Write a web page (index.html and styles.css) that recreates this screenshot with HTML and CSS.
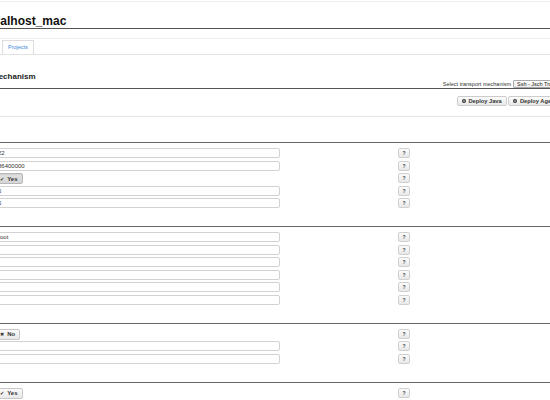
FILE: index.html
```html
<!DOCTYPE html>
<html lang="en">
<head>
  <meta charset="UTF-8">
  <meta name="viewport" content="width=device-width, initial-scale=1.0">
  <title>localhost_mac</title>
  <link rel="stylesheet" href="styles.css">
</head>
<body>
  <div class="page">
    <h1 class="host">localhost_mac</h1>

    <ul class="tabs">
      <li class="tab">Projects</li>
    </ul>

    <div class="mech-head">
      <h2>Mechanism</h2>
      <div class="transport">
        <label for="transport">Select transport mechanism</label>
        <select id="transport">
          <option>Ssh - Jsch Transport</option>
        </select>
      </div>
    </div>

    <div class="deploy">
      <button class="deploy-btn java"><svg width="4" height="4" viewBox="0 0 4 4"><circle cx="2" cy="2" r="1.4" fill="none" stroke="#333" stroke-width="1.2"/></svg>Deploy Java</button>
      <button class="deploy-btn agent"><svg width="4" height="4" viewBox="0 0 4 4"><circle cx="2" cy="2" r="1.4" fill="none" stroke="#333" stroke-width="1.2"/></svg>Deploy Agent</button>
    </div>

    <!-- connection -->
    <section class="group first">
      <div class="row"><input type="text" value="22"><button class="help">?</button></div>
      <div class="row"><input type="text" value="86400000"><button class="help">?</button></div>
      <div class="row"><div><button class="toggle on"><span class="mark">&#10004;</span>Yes</button></div><button class="help">?</button></div>
      <div class="row"><input type="text" value="5"><button class="help">?</button></div>
      <div class="row"><input type="text" value="5"><button class="help">?</button></div>
    </section>

    <!-- credentials -->
    <section class="group">
      <div class="row"><input type="text" value="root"><button class="help">?</button></div>
      <div class="row"><input type="text" value=""><button class="help">?</button></div>
      <div class="row"><input type="text" value=""><button class="help">?</button></div>
      <div class="row"><input type="text" value=""><button class="help">?</button></div>
      <div class="row"><input type="text" value=""><button class="help">?</button></div>
      <div class="row"><input type="text" value=""><button class="help">?</button></div>
    </section>

    <!-- proxy -->
    <section class="group">
      <div class="row"><div><button class="toggle"><span class="mark">&#10006;</span>No</button></div><button class="help">?</button></div>
      <div class="row"><input type="text" value=""><button class="help">?</button></div>
      <div class="row"><input type="text" value=""><button class="help">?</button></div>
    </section>

    <section class="group last">
      <div class="row"><div><button class="toggle"><span class="mark">&#10004;</span>Yes</button></div><button class="help">?</button></div>
    </section>
  </div>
</body>
</html>
```

FILE: styles.css
```css
body {
  margin: 0;
  font-family: "Liberation Sans", "DejaVu Sans", Arial, sans-serif;
  color: #333;
  background-color: #fff;
  overflow: hidden;
}

.page {
  width: 600px;
  margin: 1px 0 0 -20px;
  border-top: 1px solid #efefef;
}

.host {
  margin: 12px 0 0;
  padding-left: 3px;
  font-size: 12px;
  line-height: 14px;
  font-weight: bold;
  color: #111;
  border-bottom: 1px solid #555;
}

.tabs {
  display: flex;
  margin: 9px 0 0;
  padding: 1px 0 0 22px;
  list-style: none;
  border-top: 1px solid #eee;
  border-bottom: 1px solid #e3e3e3;
}

.tab {
  height: 13px;
  padding: 0 5px;
  line-height: 13px;
  font-size: 5.5px;
  color: #3b86d4;
  border: 1px solid #ddd;
  border-bottom: 0;
  background-color: #fff;
}

.mech-head {
  display: flex;
  align-items: flex-end;
  justify-content: space-between;
  padding-top: 17px;
  border-bottom: 1px solid #555;
}

.mech-head h2 {
  margin: 0 0 6px 12px;
  font-size: 8px;
  line-height: 10px;
  color: #222;
}

.transport {
  display: flex;
  align-items: center;
  gap: 2px;
  height: 8px;
}

.transport label {
  font-size: 5.5px;
  line-height: 8px;
  color: #333;
}

.transport select {
  appearance: none;
  width: 67px;
  height: 8px;
  padding: 0 3px;
  border: 1px solid #aaa;
  border-radius: 1px;
  font-family: inherit;
  font-size: 5.5px;
  line-height: 6px;
  color: #222;
  background: linear-gradient(#fff, #ececec);
}

.deploy {
  display: flex;
  justify-content: flex-end;
  gap: 1.5px;
  padding: 7px 16px 10px 0;
  border-bottom: 1px solid #e6e6e6;
}

.deploy-btn {
  display: flex;
  align-items: center;
  gap: 3px;
  height: 10px;
  padding: 0 3px 0 4px;
  border: 1px solid #ccc;
  border-radius: 2px;
  font-family: inherit;
  font-size: 5.7px;
  font-weight: bold;
  color: #333;
  background: linear-gradient(#fdfdfd, #e8e8e8);
}

.deploy-btn.java {
  width: 50px;
}

.deploy-btn.agent {
  width: 56px;
}

.group {
  padding: 5px 0 15.5px 15px;
  border-top: 1px solid #666;
}

.group.first {
  margin-top: 25px;
}

.row {
  display: grid;
  grid-template-columns: 403px 12px;
  align-items: start;
  height: 12.5px;
}

.row input {
  box-sizing: border-box;
  width: 285px;
  height: 10px;
  padding: 0 2px;
  border: 1px solid #d2d2d2;
  border-radius: 2px;
  font-family: inherit;
  font-size: 6px;
  color: #333;
  background-color: #fff;
  outline: none;
}

.help {
  box-sizing: border-box;
  width: 12px;
  height: 10px;
  padding: 0;
  border: 1px solid #d0d0d0;
  border-radius: 2px;
  font-family: inherit;
  font-size: 5px;
  font-weight: bold;
  line-height: 8px;
  color: #444;
  background: linear-gradient(#fbfbfb, #e8e8e8);
}

.toggle {
  display: flex;
  align-items: center;
  gap: 3px;
  box-sizing: border-box;
  height: 11px;
  padding: 0 4px;
  border: 1px solid #c8c8c8;
  border-radius: 2px;
  font-family: inherit;
  font-size: 6px;
  font-weight: bold;
  color: #333;
  background: linear-gradient(#fafafa, #e8e8e8);
}

.toggle.on {
  border-color: #b8b8b8;
  background: linear-gradient(#e2e2e2, #d6d6d6);
  box-shadow: inset 0 1px 1px rgba(0, 0, 0, 0.08);
}

.toggle .mark {
  font-family: "DejaVu Sans", sans-serif;
  font-size: 5px;
  font-weight: normal;
}
```
